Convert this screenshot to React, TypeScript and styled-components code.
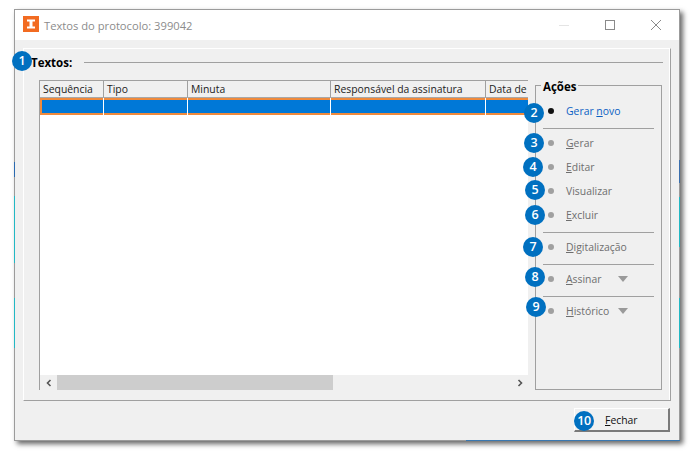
import * as React from 'react';
import styled, { createGlobalStyle } from 'styled-components';

const GlobalStyle = createGlobalStyle`
  html, body {
    margin: 0;
    padding: 0;
    background: #ffffff;
  }
  body {
    width: 693px;
    height: 454px;
    overflow: hidden;
    font-family: "Open Sans", "Noto Sans", sans-serif;
    font-size: 10.4px;
  }
`;

const columns = [
  { label: 'Sequência', width: 64 },
  { label: 'Tipo', width: 84 },
  { label: 'Minuta', width: 143 },
  { label: 'Responsável da assinatura', width: 155 },
  { label: 'Data de', width: 43 },
];

type Action = {
  before: string;
  key?: string;
  after?: string;
  badge: string;
  dx: number;
  dy: number;
  menu?: boolean;
  primary?: boolean;
};

const groups: Action[][] = [
  [{ before: 'Gerar ', key: 'n', after: 'ovo', badge: '2', dx: -19, dy: 2, primary: true }],
  [
    { before: '', key: 'G', after: 'erar', badge: '3', dx: -19, dy: 0 },
    { before: '', key: 'E', after: 'ditar', badge: '4', dx: -20, dy: 0 },
    { before: 'Visualizar', badge: '5', dx: -18, dy: -1 },
    { before: '', key: 'E', after: 'xcluir', badge: '6', dx: -18, dy: 0 },
  ],
  [{ before: '', key: 'D', after: 'igitalização', badge: '7', dx: -20, dy: 0 }],
  [{ before: '', key: 'A', after: 'ssinar', badge: '8', dx: -18, dy: -2, menu: true }],
  [{ before: '', key: 'H', after: 'istórico', badge: '9', dx: -17, dy: -4, menu: true }],
];

// bits of the windows behind that show through the 1px border
const edgeMarks = [
  { side: 'left', start: 152, size: 15, color: '#2a6ab0' },
  { side: 'left', start: 186, size: 67, color: '#22b8c4' },
  { side: 'left', start: 288, size: 50, color: '#22b8c4' },
  { side: 'right', start: 150, size: 23, color: '#3a6fae' },
  { side: 'right', start: 187, size: 50, color: '#22b8c4' },
  { side: 'right', start: 288, size: 50, color: '#22b8c4' },
] as const;

export default function App() {
  return (
    <>
      <GlobalStyle />
      <Page>
        <Window>
          {edgeMarks.map((m) => (
            <EdgeMark key={m.side + m.start} $side={m.side} $start={m.start} $size={m.size} $color={m.color} />
          ))}
          <BottomMark />
          <TitleBar>
            <AppIcon>
              <svg width="16" height="16" viewBox="0 0 16 16">
                <rect width="16" height="16" fill="#f26b21" />
                <path d="M4 3.5h8v2h-2.5v5H12v2H4v-2h2.5v-5H4z" fill="#ffffff" />
              </svg>
            </AppIcon>
            <Title>Textos do protocolo: 399042</Title>
            <WindowButtons>
              <svg width="12" height="12" viewBox="0 0 12 12">
                <path d="M1 6.5h10" stroke="#e4e4e4" fill="none" />
              </svg>
              <svg width="12" height="12" viewBox="0 0 12 12">
                <rect x="1.5" y="1.5" width="9" height="9" stroke="#8a8a8a" fill="none" />
              </svg>
              <svg width="12" height="12" viewBox="0 0 12 12">
                <path d="M1 1l10 10M11 1L1 11" stroke="#8a8a8a" fill="none" />
              </svg>
            </WindowButtons>
          </TitleBar>
          <Body>
            <Frame>
              <FrameHeading>
                <Badge $left={-12} $top={2}>1</Badge>
                <HeadingText>Textos:</HeadingText>
                <HeadingRule />
              </FrameHeading>
              <FrameContent>
                <Grid>
                  <HeaderRow>
                    {columns.map((c) => (
                      <HeaderCell key={c.label} $width={c.width}>{c.label}</HeaderCell>
                    ))}
                  </HeaderRow>
                  <SelectedRow>
                    {columns.map((c) => (
                      <SelectedCell key={c.label} $width={c.width} />
                    ))}
                  </SelectedRow>
                  <GridSpace />
                  <ScrollBar>
                    <ScrollButton>
                      <svg width="8" height="8" viewBox="0 0 8 8">
                        <path d="M5.5 1L2.5 4l3 3" stroke="#555555" strokeWidth="1.6" fill="none" />
                      </svg>
                    </ScrollButton>
                    <ScrollTrack>
                      <ScrollThumb />
                    </ScrollTrack>
                    <ScrollButton>
                      <svg width="8" height="8" viewBox="0 0 8 8">
                        <path d="M2.5 1l3 3-3 3" stroke="#555555" strokeWidth="1.6" fill="none" />
                      </svg>
                    </ScrollButton>
                  </ScrollBar>
                </Grid>
                <ActionsBox>
                  <ActionsLegend>Ações</ActionsLegend>
                  {groups.map((group, i) => (
                    <ActionGroup key={i}>
                      {group.map((a) => (
                        <ActionRow key={a.badge} $primary={a.primary}>
                          <Badge $left={a.dx} $top={2 + a.dy}>{a.badge}</Badge>
                          <ActionDot $primary={a.primary} />
                          <ActionLabel $menu={a.menu}>
                            {a.before}
                            {a.key && <u>{a.key}</u>}
                            {a.after}
                          </ActionLabel>
                          {a.menu && <MenuCaret />}
                        </ActionRow>
                      ))}
                    </ActionGroup>
                  ))}
                </ActionsBox>
              </FrameContent>
            </Frame>
            <Footer>
              <CloseButton>
                <Badge $left={-1} $top={2}>10</Badge>
                <span><u>F</u>echar</span>
              </CloseButton>
            </Footer>
          </Body>
        </Window>
      </Page>
    </>
  );
}

const Page = styled.div`
  width: 693px;
  height: 454px;
  padding: 9px 0 0 14px;
  box-sizing: border-box;
`;

const Window = styled.div`
  position: relative;
  width: 666px;
  height: 432px;
  box-sizing: border-box;
  border: 1px solid #9b9b9b;
  background: #f0f0f0;
  box-shadow: 3px 3px 5px rgba(0, 0, 0, 0.6);
  display: flex;
  flex-direction: column;
`;

const EdgeMark = styled.i<{ $side: 'left' | 'right'; $start: number; $size: number; $color: string }>`
  position: absolute;
  ${(p) => p.$side}: -1px;
  top: ${(p) => p.$start}px;
  width: 1px;
  height: ${(p) => p.$size}px;
  background: ${(p) => p.$color};
`;

const BottomMark = styled.i`
  position: absolute;
  right: -1px;
  bottom: -1px;
  width: 214px;
  height: 1px;
  background: #3a78b0;
`;

const TitleBar = styled.div`
  height: 30px;
  flex: none;
  background: #ffffff;
  display: flex;
  align-items: center;
  padding-left: 8px;
`;

const AppIcon = styled.div`
  width: 16px;
  height: 16px;
  margin-bottom: 2px;
  line-height: 0;
`;

const Title = styled.div`
  margin-left: 5px;
  color: #8c8c8c;
  font-size: 11.2px;
`;

const WindowButtons = styled.div`
  margin-left: auto;
  display: flex;
  gap: 34px;
  padding-right: 17px;
`;

const Body = styled.div`
  flex: 1;
  display: flex;
  flex-direction: column;
  padding: 8px 8px 0;
  min-height: 0;
`;

const Frame = styled.div`
  height: 353px;
  flex: none;
  box-sizing: border-box;
  border-top: 1px solid #ffffff;
  border-left: 1px solid #ffffff;
  border-right: 1px solid #a0a0a0;
  border-bottom: 1px solid #a0a0a0;
  box-shadow: inset -1px 0 0 #ffffff;
  display: flex;
  flex-direction: column;
`;

const FrameHeading = styled.div`
  position: relative;
  height: 31px;
  flex: none;
  display: flex;
  align-items: center;
  padding: 0 7px 4px 7px;
  box-sizing: border-box;
`;

const HeadingText = styled.div`
  font-weight: 700;
  font-size: 11.5px;
  color: #000000;
`;

const HeadingRule = styled.div`
  flex: 1;
  margin-left: 12px;
  height: 1px;
  background: #a0a0a0;
`;

const FrameContent = styled.div`
  flex: 1;
  display: flex;
  gap: 7px;
  padding: 0 7px 10px 15px;
  min-height: 0;
`;

const Grid = styled.div`
  width: 489px;
  flex: none;
  box-sizing: border-box;
  border-left: 1px solid #a0a0a0;
  border-top: 1px solid #a0a0a0;
  background: #ffffff;
  display: flex;
  flex-direction: column;
  overflow: hidden;
`;

const HeaderRow = styled.div`
  display: flex;
  height: 17px;
  flex: none;
  box-sizing: border-box;
  border-bottom: 1px solid #a8a8a8;
  background: #f0f0f0;
`;

const HeaderCell = styled.div<{ $width: number }>`
  width: ${(p) => p.$width}px;
  flex: none;
  box-sizing: border-box;
  border-right: 1px solid #a0a0a0;
  padding-left: 3px;
  line-height: 17px;
  color: #222222;
  white-space: nowrap;
  overflow: hidden;
  &:last-child {
    border-right: 0;
  }
`;

/* wider than the grid so the cursor outline runs off its right edge */
const SelectedRow = styled.div`
  display: flex;
  width: 500px;
  height: 17px;
  flex: none;
  background: #0078d7;
  box-shadow: inset 0 0 0 2px #f08a3c;
`;

const SelectedCell = styled.div<{ $width: number }>`
  width: ${(p) => p.$width}px;
  flex: none;
  box-sizing: border-box;
  border-right: 1px solid #ffffff;
  &:last-child {
    border-right: 0;
  }
`;

const GridSpace = styled.div`
  flex: 1;
`;

const ScrollBar = styled.div`
  height: 15px;
  flex: none;
  display: flex;
  background: #f0f0f0;
`;

const ScrollButton = styled.div`
  width: 17px;
  flex: none;
  display: flex;
  align-items: center;
  justify-content: center;
`;

const ScrollTrack = styled.div`
  flex: 1;
`;

const ScrollThumb = styled.div`
  width: 276px;
  height: 100%;
  background: #cdcdcd;
`;

const ActionsBox = styled.div`
  position: relative;
  width: 127px;
  flex: none;
  margin-top: 5px;
  box-sizing: border-box;
  border: 1px solid #a0a0a0;
  padding: 13px 7px 0;
`;

const ActionsLegend = styled.div`
  position: absolute;
  left: 5px;
  top: -6px;
  padding: 0 2px;
  background: #f0f0f0;
  font-weight: 700;
  font-size: 11.5px;
  line-height: 14px;
  color: #000000;
`;

const ActionGroup = styled.div`
  padding-bottom: 5px;
  margin-bottom: 2px;
  border-bottom: 1px solid #a0a0a0;
  &:last-child {
    border-bottom: 0;
  }
`;

const ActionRow = styled.div<{ $primary?: boolean }>`
  position: relative;
  height: 24px;
  display: flex;
  align-items: center;
  color: ${(p) => (p.$primary ? '#0a5fc4' : '#6e6e6e')};
`;

const ActionDot = styled.i<{ $primary?: boolean }>`
  width: 6px;
  height: 6px;
  border-radius: 50%;
  margin: 0 12px 0 5px;
  flex: none;
  background: ${(p) => (p.$primary ? '#111111' : '#a0a0a0')};
`;

const ActionLabel = styled.span<{ $menu?: boolean }>`
  width: ${(p) => (p.$menu ? '52px' : 'auto')};
  flex: none;
`;

const MenuCaret = styled.i`
  width: 0;
  height: 0;
  border-left: 5.5px solid transparent;
  border-right: 5.5px solid transparent;
  border-top: 6px solid #9a9a9a;
`;

const Badge = styled.b<{ $left: number; $top: number }>`
  position: absolute;
  left: ${(p) => p.$left}px;
  top: ${(p) => p.$top}px;
  width: 20px;
  height: 20px;
  border-radius: 50%;
  background: #0070c0;
  color: #ffffff;
  font-family: "Open Sans", sans-serif;
  font-size: 12.5px;
  font-weight: 600;
  letter-spacing: -0.3px;
  line-height: 20px;
  text-align: center;
`;

const Footer = styled.div`
  flex: 1;
  display: flex;
  justify-content: flex-end;
  align-items: flex-start;
  padding: 7px 1px 0 0;
`;

const CloseButton = styled.div`
  position: relative;
  width: 96px;
  height: 24px;
  box-sizing: border-box;
  background: #f0f0f0;
  border-top: 1px solid #ffffff;
  border-left: 1px solid #ffffff;
  border-right: 2px solid #7a7a7a;
  border-bottom: 2px solid #7a7a7a;
  color: #111111;
  display: flex;
  align-items: center;
  padding-left: 30px;
`;
